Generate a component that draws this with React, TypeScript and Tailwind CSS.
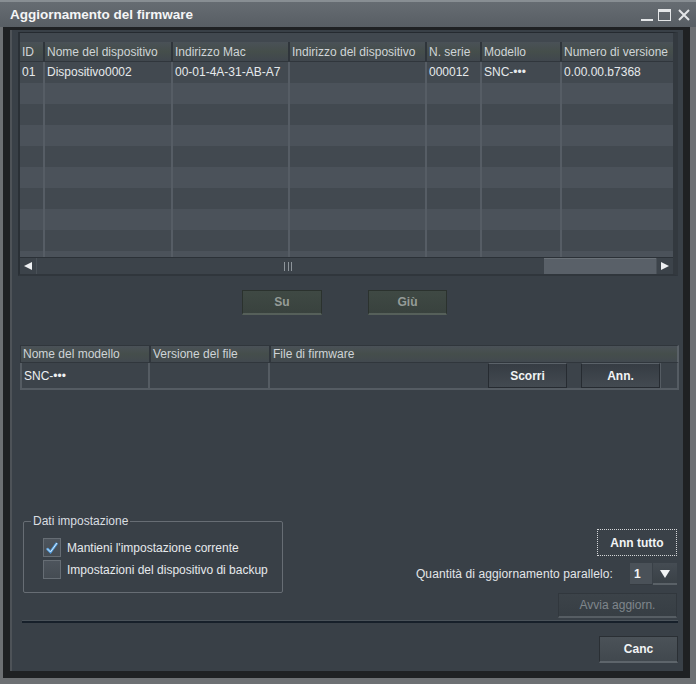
const deviceCols = [
  { label: "ID", value: "01", cls: "w-[25px]" },
  { label: "Nome del dispositivo", value: "Dispositivo0002", cls: "w-[128px]" },
  { label: "Indirizzo Mac", value: "00-01-4A-31-AB-A7", cls: "w-[117px]" },
  { label: "Indirizzo del dispositivo", value: "", cls: "w-[137px]" },
  { label: "N. serie", value: "000012", cls: "w-[55px]" },
  { label: "Modello", value: "SNC-•••", cls: "w-[80px]" },
  { label: "Numero di versione", value: "0.00.00.b7368", cls: "w-[130px]" },
];

const rowCount = 10;

const WindowButtons = () => (
  <div className="flex items-start gap-[5px] pt-[2px]">
    {/* Minimize */}
    <svg width="12" height="13" viewBox="0 0 12 13">
      <rect x="0" y="10" width="12" height="2" fill="#e4e6e8" />
    </svg>
    {/* Maximize */}
    <svg width="13" height="13" viewBox="0 0 13 13">
      <rect x="0.5" y="0.5" width="12" height="11" fill="none" stroke="#e4e6e8" />
      <rect x="0" y="0" width="13" height="3" fill="#e4e6e8" />
    </svg>
    {/* Close */}
    <svg width="12" height="13" viewBox="0 0 12 13" className="ml-[2px]">
      <path d="M1 1 L11 11 M11 1 L1 11" stroke="#e4e6e8" strokeWidth="2" />
    </svg>
  </div>
);

const DeviceTable = () => (
  <div className="ml-[6px] mt-[2px] w-[660px] h-[244px] shrink-0 flex flex-col border-t border-l-2 border-r-[5px] border-b-2 border-t-[#252a30] border-l-[#2a3036] border-r-[#33393f] border-b-[#30363c] bg-[#41484f] pt-[9px]">
    <div className="flex-1 overflow-hidden">
      {/* Header */}
      <div className="flex h-[20px] w-max bg-linear-to-b from-[#4a5157] via-[#454e4b] to-[#40474e] border-b border-[#30363c]">
        {deviceCols.map((c) => (
          <div
            key={c.label}
            className={`${c.cls} shrink-0 px-[2px] text-[12px] leading-[20px] text-[#cfd4d8] whitespace-nowrap overflow-hidden border-r-2 border-[#2f353b]`}
          >
            {c.label}
          </div>
        ))}
      </div>
      {/* Rows */}
      {Array.from({ length: rowCount }).map((_, i) => (
        <div
          key={i}
          className={`flex h-[21px] w-max ${i % 2 === 0 ? "bg-[#424950]" : "bg-[#4b525a]"}`}
        >
          {deviceCols.map((c) => (
            <div
              key={c.label}
              className={`${c.cls} shrink-0 px-[2px] text-[12px] leading-[21px] text-[#e6e9ec] whitespace-nowrap overflow-hidden border-r-2 border-[#565d65]`}
            >
              {i === 0 ? c.value : ""}
            </div>
          ))}
        </div>
      ))}
    </div>
    {/* Horizontal scrollbar */}
    <div className="h-[17px] shrink-0 flex bg-[#3c434a] border-t border-[#2b3137]">
      <div className="w-[17px] flex items-center justify-center border-r border-[#4a5158]">
        <svg width="10" height="10" viewBox="0 0 10 10">
          <path d="M1 5 L9 1 L9 9 Z" fill="#eef0f2" />
        </svg>
      </div>
      <div className="flex-1 flex">
        <div className="w-[246px]" />
        <div className="w-[10px] flex items-center justify-between px-[1px]">
          <div className="w-[1px] h-[9px] bg-[#8d949a]" />
          <div className="w-[1px] h-[9px] bg-[#8d949a]" />
          <div className="w-[1px] h-[9px] bg-[#8d949a]" />
        </div>
        <div className="flex-1" />
        <div className="w-[112px] bg-[#596068] border-t border-[#6a7178]" />
      </div>
      <div className="w-[17px] flex items-center justify-center border-l border-[#4a5158]">
        <svg width="10" height="10" viewBox="0 0 10 10">
          <path d="M9 5 L1 1 L1 9 Z" fill="#eef0f2" />
        </svg>
      </div>
    </div>
  </div>
);

const DisabledButton = ({ label, cls }: { label: string; cls: string }) => (
  <button
    className={`${cls} h-[25px] bg-linear-to-b from-[#3f4944] to-[#39423e] border border-[#2b322e] border-b-2 border-b-[#56605a] text-[12px] font-bold text-[#959c98]`}
  >
    {label}
  </button>
);

const FirmwareTable = () => (
  <div className="ml-[8px] mt-[30px] w-[659px] shrink-0 flex flex-col">
    {/* Header */}
    <div className="flex h-[18px] bg-linear-to-b from-[#4a5157] via-[#454e4b] to-[#42494f] border border-[#30363c] border-r-2 border-r-[#5a6167]">
      <div className="w-[130px] shrink-0 px-[2px] text-[12px] leading-[16px] text-[#cfd4d8] border-r-2 border-[#30363c]">
        Nome del modello
      </div>
      <div className="w-[120px] shrink-0 px-[2px] text-[12px] leading-[16px] text-[#cfd4d8] border-r-2 border-[#30363c]">
        Versione del file
      </div>
      <div className="flex-1 px-[2px] text-[12px] leading-[16px] text-[#cfd4d8]">File di firmware</div>
    </div>
    {/* Row */}
    <div className="flex h-[27px] bg-[#3c434a] border-l-2 border-b-2 border-r-2 border-[#555c63]">
      <div className="w-[128px] shrink-0 px-[2px] text-[12px] leading-[27px] text-[#eef0f2] border-r-2 border-[#555c63]">
        SNC-•••
      </div>
      <div className="w-[120px] shrink-0 border-r-2 border-[#555c63]" />
      <div className="w-[218px] shrink-0" />
      <button className="w-[79px] shrink-0 h-full bg-linear-to-b from-[#363c43] to-[#434a51] border border-[#262b31] border-t-[#5b6269] text-[12px] font-bold text-[#f2f4f5]">
        Scorri
      </button>
      <div className="w-[14px] shrink-0" />
      <button className="w-[79px] shrink-0 h-full bg-linear-to-b from-[#363c43] to-[#434a51] border border-[#262b31] border-t-[#5b6269] text-[12px] font-bold text-[#f2f4f5]">
        Ann.
      </button>
      <div className="flex-1 border-l border-[#555c63]" />
    </div>
  </div>
);

const CheckRow = ({ label, checked }: { label: string; checked: boolean }) => (
  <div className="flex items-center h-[19px] gap-[6px]">
    <div className="w-[18px] h-[19px] shrink-0 bg-linear-to-b from-[#4d545c] to-[#454c53] border border-[#666d74] flex items-center justify-center">
      {checked && (
        <svg width="14" height="14" viewBox="0 0 14 14">
          <path d="M2 7.5 L5.5 11 L12 2" fill="none" stroke="#4f9ee0" strokeWidth="2.6" />
          <path d="M2 7.5 L5.5 11 L12 2" fill="none" stroke="#dcecfb" strokeWidth="1" />
        </svg>
      )}
    </div>
    <span className="text-[12px] text-[#e6e9ec] whitespace-nowrap">{label}</span>
  </div>
);

const SettingsGroup = () => (
  <fieldset className="ml-[11px] w-[260px] h-[79px] shrink-0 border border-[#676d74] rounded-[2px]">
    <legend className="ml-[7px] px-[2px] text-[12px] leading-[14px] text-[#dadee1]">Dati impostazione</legend>
    <div className="pl-[19px] pt-[10px] flex flex-col gap-[3px]">
      <CheckRow label="Mantieni l'impostazione corrente" checked />
      <CheckRow label="Impostazioni del dispositivo di backup" checked={false} />
    </div>
  </fieldset>
);

const UpdateControls = () => (
  <div className="ml-auto mr-[6px] flex flex-col items-end">
    <button className="mt-[15px] w-[80px] h-[27px] bg-[#3a4148] border border-dotted border-[#d4d6d8] text-[12px] font-bold text-[#f2f4f5]">
      Ann tutto
    </button>
    <div className="mt-[7px] h-[22px] flex items-center">
      <span className="text-[12px] tracking-[0.1px] text-[#e3e6e9] whitespace-nowrap">Quantità di aggiornamento parallelo:</span>
      <div className="ml-[17px] w-[22px] h-[22px] bg-[#4a5158] border-b border-[#353b41] text-[12px] font-bold text-[#f2f4f5] leading-[22px] pl-[4px]">
        1
      </div>
      <div className="ml-[1px] w-[24px] h-[22px] bg-linear-to-b from-[#454c53] to-[#3a4147] border-b-2 border-[#5a6167] flex items-center justify-center">
        <svg width="10" height="9" viewBox="0 0 10 9">
          <path d="M0 1 L10 1 L5 9 Z" fill="#f2f4f5" />
        </svg>
      </div>
    </div>
    <button className="mt-[8px] w-[119px] h-[25px] bg-linear-to-b from-[#3c4349] to-[#373e44] border border-[#31373d] border-b-2 border-b-[#565d63] text-[12px] text-[#7f868c]">
      Avvia aggiorn.
    </button>
  </div>
);

export default function App() {
  return (
    <div className="w-[696px] h-[684px] flex flex-col bg-[#6d7073] font-['Liberation_Sans',Arial,sans-serif] select-none">
      {/* Title bar */}
      <div className="h-[27px] shrink-0 flex items-center justify-between pl-[10px] pr-[6px] bg-linear-to-b from-[#666c72] to-[#585e64] border-t-2 border-[#888e93]">
        <span className="text-[13.5px] font-bold text-[#f4f5f6] leading-none">Aggiornamento del firmware</span>
        <WindowButtons />
      </div>
      {/* Frame */}
      <div className="flex-1 flex pl-[3px] pr-[6px] pb-[6px]">
        <div className="flex-1 flex bg-[#1f2123] pt-[3px] pl-[7px] pr-[7px] pb-[7px]">
          <div className="flex-1 border-l-2 border-[#4e5358] bg-[#394047] flex flex-col">
            <DeviceTable />
            <div className="mt-[14px] pl-[230px] flex gap-[46px] shrink-0">
              <DisabledButton label="Su" cls="w-[80px]" />
              <DisabledButton label="Giù" cls="w-[79px]" />
            </div>
            <FirmwareTable />
            <div className="mt-[124px] flex items-start shrink-0">
              <SettingsGroup />
              <UpdateControls />
            </div>
            {/* Separator */}
            <div className="ml-[10px] mr-[5px] mt-[2px] shrink-0">
              <div className="h-[1px] bg-[#4a5259]" />
              <div className="h-[2px] bg-[#17202a]" />
            </div>
            <button className="self-end mr-[5px] mt-[13px] w-[79px] h-[27px] shrink-0 bg-linear-to-b from-[#4b5258] to-[#41484e] border border-[#2a2f34] border-b-2 border-b-[#5e656b] text-[12px] font-bold text-[#f2f4f5]">
              Canc
            </button>
          </div>
        </div>
      </div>
    </div>
  );
}
